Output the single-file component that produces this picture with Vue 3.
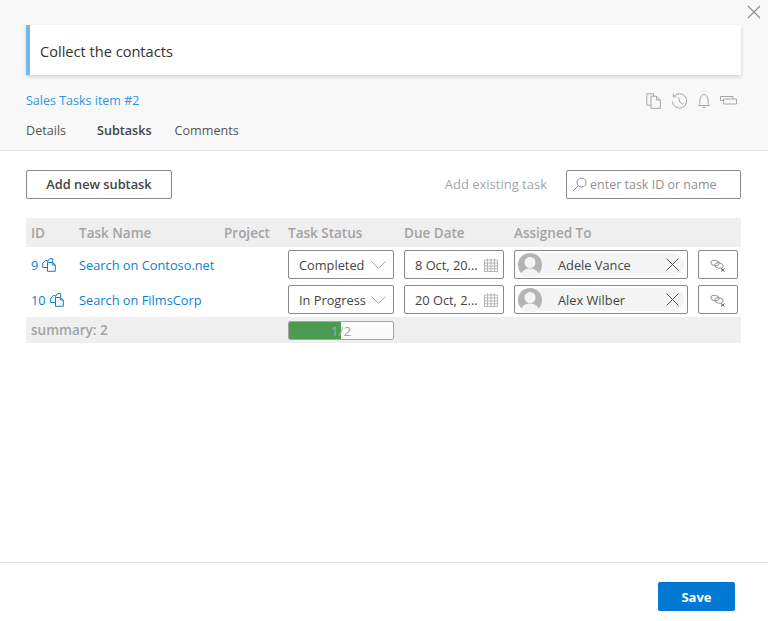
<template>
  <div class="dialog">
    <button class="close-btn" aria-label="Close">
      <svg width="14" height="14" viewBox="0 0 14 14"><path d="M1 1l12 12M13 1L1 13" stroke="#8f8f8f" stroke-width="1.1" fill="none" /></svg>
    </button>

    <header class="head">
      <div class="title-card">Collect the contacts</div>
      <div class="meta-row">
        <a class="link item-link">Sales Tasks item #2</a>
        <div class="head-icons">
          <!-- copy -->
          <svg width="16" height="16" viewBox="0 0 16 16"><path d="M.8 .8h6.700v2.400M.8 .8v11.400h4M5 3.200h5.500l3.800 3.800v8.300H5zM10.500 3.200V7h3.800" fill="none" stroke="#a6a6a6" /></svg>
          <!-- history -->
          <svg width="17" height="17" viewBox="0 0 17 17"><path d="M2.600 3.800A7.200 7.200 0 1 1 1.300 8.500M2.300 .9v3h3M7.500 4.500l1.300 4.500 3.300 2.500" fill="none" stroke="#a6a6a6" /></svg>
          <!-- bell -->
          <svg width="14" height="16" viewBox="0 0 14 16"><path d="M1.500 12.500c1.200-1 1.500-2.500 1.500-5.500 0-3.200 1.600-5.500 4-5.500s4 2.300 4 5.500c0 3 .3 4.500 1.500 5.500zM5.500 14.500h3" fill="none" stroke="#a6a6a6" /></svg>
          <!-- boards -->
          <svg width="17" height="12" viewBox="0 0 17 12"><path d="M.5 1.500h12.500v2.500M.5 1.500v4h3M3.500 4h13v5h-13z" fill="none" stroke="#a6a6a6" /></svg>
        </div>
      </div>
      <nav class="tabs">
        <span v-for="t in tabs" :key="t" class="tab" :class="{ active: t === 'Subtasks' }">{{ t }}</span>
      </nav>
    </header>

    <main class="body">
      <div class="toolbar">
        <button class="add-btn">Add new subtask</button>
        <div class="existing">
          <span class="existing-label">Add existing task</span>
          <div class="search-box">
            <svg width="15" height="15" viewBox="0 0 15 15"><circle cx="9.500" cy="5.500" r="4.500" fill="none" stroke="#8c8c8c" /><path d="M6.300 8.700L.8 14.200" stroke="#8c8c8c" /></svg>
            <span>enter task ID or name</span>
          </div>
        </div>
      </div>

      <div class="grid">
        <div class="cell hcell">ID</div>
        <div class="cell hcell">Task Name</div>
        <div class="cell hcell">Project</div>
        <div class="cell hcell">Task Status</div>
        <div class="cell hcell">Due Date</div>
        <div class="cell hcell">Assigned To</div>
        <div class="hcell"></div>

        <template v-for="r in rows" :key="r.id">
          <div class="cell link id-cell">
            {{ r.id }}
            <svg width="14" height="14" viewBox="0 0 14 14"><path d="M5.500 4.500V3.500L7.500 .7h3.200v3.800M5 9.500H.7V5L3.500 2.500H5.500M5.500 4.500h5l2.800 2.500v6.300H5.500zM10.300 4.500V7h3" fill="none" stroke="#0a7fd6" /></svg>
          </div>
          <div class="cell link">{{ r.name }}</div>
          <div class="cell"></div>
          <div class="ctl-wrap">
            <div class="ctl status">
              <span>{{ r.status }}</span>
              <svg width="15" height="8" viewBox="0 0 15 8"><path d="M.5 .5l7 7 7-7" fill="none" stroke="#a6a6a6" /></svg>
            </div>
          </div>
          <div class="ctl-wrap">
            <div class="ctl date">
              <span>{{ r.due }}</span>
              <svg width="14" height="14" viewBox="0 0 14 14"><path d="M.5 2h13v11.500H.5zM.5 5h13M.5 8h13M.5 10.800h13M3.500 .5v12.500M7 .5v12.500M10.500 .5v12.500" fill="none" stroke="#b0b0b0" stroke-width=".9" /></svg>
            </div>
          </div>
          <div class="ctl-wrap">
            <div class="ctl people">
              <div class="chip">
                <svg class="avatar" width="24" height="24" viewBox="0 0 24 24"><circle cx="12" cy="12" r="12" fill="#b4b4b4" /><circle cx="12" cy="9.500" r="5.500" fill="#f4f4f4" /><path d="M3 21c2-4 5-5.500 9-5.500s7 1.500 9 5.500a12 12 0 0 1-18 0z" fill="#f4f4f4" /></svg>
                <span class="person">{{ r.person }}</span>
                <svg width="13" height="13" viewBox="0 0 13 13"><path d="M.5 .5l12 12M12.500 .5l-12 12" stroke="#555" fill="none" /></svg>
              </div>
            </div>
          </div>
          <div class="ctl-wrap">
            <div class="ctl unlink">
              <svg width="16" height="13" viewBox="0 0 16 13"><ellipse cx="5" cy="4" rx="4.300" ry="2.700" transform="rotate(12 5 4)" fill="none" stroke="#8a8a8a" stroke-width=".9" /><ellipse cx="9" cy="6.500" rx="4.300" ry="2.700" transform="rotate(12 9 6.500)" fill="none" stroke="#8a8a8a" stroke-width=".9" /><path d="M11 9.500l3.500 3M14.500 9.500l-3.500 3" fill="none" stroke="#444" stroke-width=".9" /></svg>
            </div>
          </div>
        </template>

        <div class="sum-label">summary: 2</div>
        <div class="sum-fill"></div>
        <div class="sum-bar-wrap">
          <div class="progress">
            <div class="progress-fill" :style="{ width: progress + '%' }"></div>
            <span class="progress-text">1/2</span>
          </div>
        </div>
        <div class="sum-fill wide"></div>
      </div>
    </main>

    <footer class="foot">
      <button class="save-btn">Save</button>
    </footer>
  </div>
</template>

<script setup>
const tabs = ['Details', 'Subtasks', 'Comments'];

const rows = [
  { id: 9, name: 'Search on Contoso.net', status: 'Completed', due: '8 Oct, 20...', person: 'Adele Vance' },
  { id: 10, name: 'Search on FilmsCorp', status: 'In Progress', due: '20 Oct, 2...', person: 'Alex Wilber' },
];

const progress = 50;
</script>

<style>
html, body {
  margin: 0;
  background: #fff;
}
</style>

<style scoped>
.dialog {
  position: relative;
  width: 768px;
  height: 621px;
  display: flex;
  flex-direction: column;
  font-family: "Open Sans", "Noto Sans", sans-serif;
  font-size: 13px;
  color: #333;
  overflow: hidden;
}

.close-btn {
  position: absolute;
  top: 5px;
  right: 7px;
  padding: 0;
  border: 0;
  background: none;
  line-height: 0;
}

.head {
  height: 151px;
  box-sizing: border-box;
  padding: 25px 27px 0 26px;
  background: #f8f8f8;
  border-bottom: 1px solid #e4e4e2;
}

.title-card {
  height: 50px;
  box-sizing: border-box;
  padding: 2px 0 0 10px;
  display: flex;
  align-items: center;
  background: #fff;
  border-left: 4px solid #71b9e8;
  box-shadow: 0 2px 4px rgba(0, 0, 0, 0.16);
  font-size: 14.600px;
  color: #323130;
}

.meta-row {
  margin-top: 15px;
  height: 20px;
  display: flex;
  justify-content: space-between;
  align-items: center;
}

.link {
  color: #0a7fd6;
}

.item-link {
  font-size: 12.500px;
  color: #2b96e6;
}

.head-icons {
  display: flex;
  align-items: center;
  gap: 9px;
  margin: 2px 4px 0 0;
}

.tabs {
  margin-top: 12px;
  display: flex;
  gap: 23px;
  font-size: 12.600px;
  color: #555;
}

.tab.active {
  margin-left: 8px;
  font-weight: 600;
  color: #444;
}

.body {
  flex: 1;
  padding: 19px 27px 0 26px;
}

.toolbar {
  display: flex;
  justify-content: space-between;
  align-items: center;
}

.add-btn {
  width: 146px;
  height: 29px;
  padding: 0 0 2px;
  background: #fff;
  border: 1px solid #8a8886;
  border-radius: 2px;
  font: 600 12.800px "Open Sans", sans-serif;
  color: #444;
}

.existing {
  display: flex;
  align-items: center;
  gap: 19px;
}

.existing-label {
  font-size: 13px;
  color: #a6a6a6;
  margin-top: -2px;
}

.search-box {
  width: 175px;
  height: 29px;
  box-sizing: border-box;
  padding-left: 5px;
  display: flex;
  align-items: center;
  gap: 3px;
  border: 1px solid #8a8886;
  border-radius: 2px;
  font-size: 12.500px;
  color: #8f8f8f;
}

.grid {
  margin-top: 19px;
  display: grid;
  grid-template-columns: 48px 145px 64px 116px 110px 184px 48px;
  grid-template-rows: 29px 35px 35px 26px;
}

.cell {
  padding-left: 5px;
  display: flex;
  align-items: center;
  white-space: nowrap;
  font-size: 12.800px;
}

.hcell {
  background: #efefef;
  font-size: 13.500px;
  font-weight: 600;
  color: #a3a3a3;
}

.id-cell {
  gap: 4px;
}

.ctl-wrap {
  padding: 3px 0 0 5px;
}

.ctl {
  height: 29px;
  box-sizing: border-box;
  padding-top: 1px;
  display: flex;
  align-items: center;
  background: #fff;
  border: 1px solid #8a8886;
  border-radius: 2px;
  font-size: 12.800px;
  color: #444;
}

.status {
  width: 106px;
  padding: 1px 7px 0 10px;
  justify-content: space-between;
}

.date {
  width: 100px;
  padding: 1px 5px 0 10px;
  justify-content: space-between;
}

.people {
  width: 174px;
  padding: 0 3px;
}

.chip {
  flex: 1;
  height: 23px;
  display: flex;
  align-items: center;
  background: #f4f4f4;
  border-radius: 12px;
  padding-right: 5px;
}

.avatar {
  flex: none;
}

.person {
  flex: 1;
  margin-left: 16px;
  font-size: 12.800px;
}

.unlink {
  width: 40px;
  justify-content: center;
}

.sum-label {
  grid-column: 1 / 3;
  padding-left: 5px;
  display: flex;
  align-items: center;
  background: #efefef;
  font-size: 13.500px;
  font-weight: 600;
  color: #a3a3a3;
}

.sum-fill {
  background: #efefef;
}

.sum-fill.wide {
  grid-column: 5 / 8;
}

.sum-bar-wrap {
  padding: 4px 0 0 5px;
  background: #efefef;
}

.progress {
  position: relative;
  width: 106px;
  height: 19px;
  box-sizing: border-box;
  background: #fbfbfb;
  border: 1px solid #a6a6a6;
  border-radius: 2px;
  overflow: hidden;
}

.progress-fill {
  height: 100%;
  background: #4c9a52;
}

.progress-text {
  position: absolute;
  inset: 0;
  display: flex;
  align-items: center;
  justify-content: center;
  font-size: 13.500px;
  color: #a6a6a6;
}

.foot {
  height: 59px;
  box-sizing: border-box;
  padding: 19px 33px 0 0;
  display: flex;
  justify-content: flex-end;
  align-items: flex-start;
  border-top: 1px solid #e1e1e1;
}

.save-btn {
  width: 77px;
  height: 29px;
  padding: 0;
  background: #0078d4;
  border: 0;
  border-radius: 2px;
  font: 700 13px "Open Sans", sans-serif;
  color: #fff;
}
</style>
